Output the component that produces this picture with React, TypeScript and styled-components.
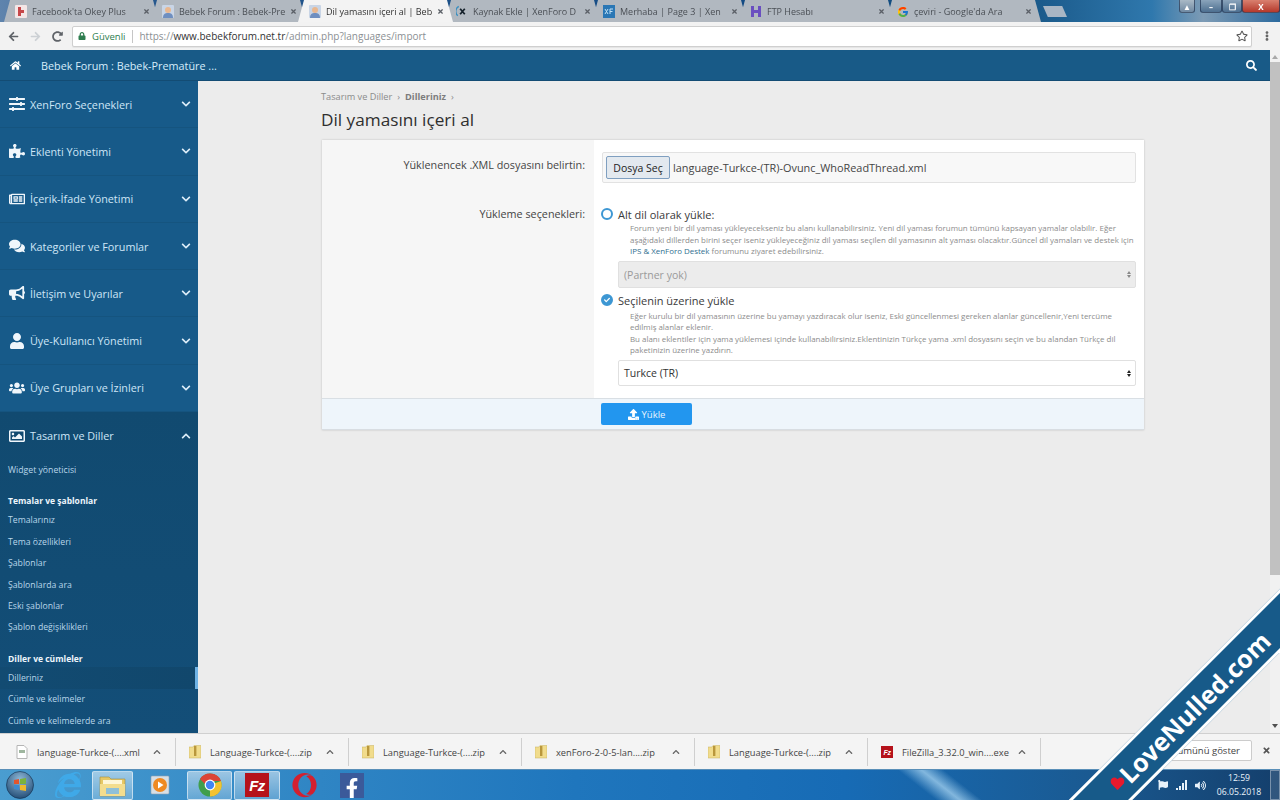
import React from "react";
import styled, { createGlobalStyle } from "styled-components";
import {
  FaHome, FaSearch, FaSlidersH, FaPuzzlePiece, FaRegNewspaper, FaComments, FaBullhorn, FaUser, FaUsers,
  FaRegImage, FaChevronDown, FaChevronUp, FaUpload, FaLock, FaRegStar, FaArrowLeft, FaArrowRight, FaRedoAlt,
  FaCheck, FaInternetExplorer, FaOpera, FaFacebookF, FaHeart, FaVolumeUp, FaFlag, FaTimes, FaEllipsisV,
} from "react-icons/fa";
import { FcGoogle } from "react-icons/fc";

const UI = `"Open Sans", "Noto Sans", sans-serif`;

const Global = createGlobalStyle`
  html, body { margin: 0; padding: 0; width: 1280px; height: 800px; overflow: hidden; background: #ececec; }
  * { box-sizing: border-box; }
  body { font-family: ${UI}; }
`;

const Screen = styled.div`
  position: relative; width: 1280px; height: 800px; overflow: hidden;
  display: flex; flex-direction: column; filter: blur(0.4px);
`;

/* Browser tabs */
const TabStrip = styled.div`
  height: 22px; flex: none; display: flex; align-items: stretch; padding-left: 4px; position: relative;
  background: linear-gradient(90deg, #5f84ad 0, #27588e 12%, #124a83 60%, #14507f 78%, #2f78ad 90%, #7d9bb5 94%, #2c6a9e 100%);
`;
const Tab = styled.div<{ $active?: boolean }>`
  width: 155px; margin-right: -8px; flex: none; display: flex; align-items: center; padding: 1px 9px 0 11px; gap: 5px;
  clip-path: polygon(0 100%, 6px 0, calc(100% - 6px) 0, 100% 100%);
  background: ${(p) => (p.$active ? "#f3f3f3" : "#b1b8c0")};
  position: relative; z-index: ${(p) => (p.$active ? 2 : 1)};
`;
const TabIcon = styled.span`
  width: 12px; height: 13px; flex: none; display: flex; align-items: center; justify-content: center;
`;
const TabTitle = styled.span<{ $active?: boolean }>`
  flex: 1; min-width: 0; overflow: hidden; white-space: nowrap; font-size: 9px; color: ${(p) => (p.$active ? "#333" : "#4a4f55")};
`;
const TabClose = styled(FaTimes)`
  flex: none; width: 7px; height: 7px; color: #5a5f66;
`;
const NewTab = styled.div`
  width: 24px; height: 11px; margin: 6px 0 0 10px; background: #a9b6c4;
  clip-path: polygon(0 0, 80% 0, 100% 100%, 20% 100%);
`;
const WindowControls = styled.div`
  position: absolute; top: 0; right: 0; height: 13px; display: flex; gap: 5px;
`;
const WinButton = styled.div<{ $w: number; $bg: string }>`
  width: ${(p) => p.$w}px; height: 13px; border: 1px solid rgba(30,50,80,.7); border-top: 0; border-radius: 0 0 3px 3px;
  background: ${(p) => p.$bg}; display: flex; align-items: center; justify-content: center; color: #fff; font-size: 8px; font-weight: 700;
`;
const WinGroup = styled.div`display: flex;`;

/* Toolbar */
const Toolbar = styled.div`
  height: 28px; flex: none; background: #f2f2f2; display: flex; align-items: center; padding: 0 8px 0 8px; color: #5f6368;
`;
const NavIcons = styled.div`
  width: 64px; flex: none; display: flex; align-items: center; gap: 11px; font-size: 11px;
`;
const FadedArrow = styled(FaArrowRight)`color: #ccd0d4;`;
const Omnibox = styled.div`
  flex: 1; height: 21px; background: #fff; border: 1px solid #cfcfcf; border-radius: 2px; display: flex; align-items: center;
  padding: 0 3px 0 5px; font-size: 10px; white-space: nowrap; box-shadow: 0 1px 0 #e5e5e5;
`;
const Secure = styled.span`
  color: #2e7d4f; display: flex; align-items: center; gap: 6px; padding-right: 7px; border-right: 1px solid #c6c6c6; height: 13px; margin-right: 6px; font-size: 9.5px;
`;
const UrlDim = styled.span`color: #8b8f93;`;
const UrlStrong = styled.span`color: #333;`;
const Star = styled(FaRegStar)`margin-left: auto; font-size: 12px; color: #555;`;
const Dots = styled(FaEllipsisV)`margin-left: 10px; font-size: 10px; color: #666;`;

/* Page */
const PageArea = styled.div`flex: 1; min-height: 0; display: flex;`;
const Scrollbar = styled.div`
  width: 10px; flex: none; background: #f1f1f1; display: flex; flex-direction: column; align-items: center; position: relative;
`;
const ScrollUp = styled.div`
  width: 0; height: 0; margin-top: 5px; border: 3px solid transparent; border-top: 0; border-bottom: 4px solid #a8a8a8;
`;
const ScrollThumb = styled.div`width: 10px; height: 513px; margin-top: 3px; background: #c1c1c1;`;
const ScrollDown = styled.div`
  width: 0; height: 0; margin-top: auto; margin-bottom: 5px; border: 3px solid transparent; border-bottom: 0; border-top: 4px solid #505050;
`;
const AdminColumn = styled.div`flex: 1; min-width: 0; display: flex; flex-direction: column;`;
const TopBar = styled.div`
  height: 31px; flex: none; background: #185a87; color: #d6ecfa; display: flex; align-items: center; padding: 0 22px 0 10px;
  border-bottom: 1px solid #134c74; font-size: 10.8px;
`;
const HomeIcon = styled(FaHome)`width: 11px; height: 11px; color: #fff; margin-right: 20px;`;
const SearchIcon = styled(FaSearch)`width: 11px; height: 11px; color: #fff; margin-left: auto; margin-right: -9px;`;
const AdminBody = styled.div`flex: 1; min-height: 0; display: flex;`;

const Sidebar = styled.nav`
  width: 198px; flex: none; background: #175a89; overflow: hidden; display: flex; flex-direction: column;
`;
const NavItem = styled.div`
  height: 47.3px; flex: none; display: flex; align-items: center; padding: 0 7px 0 9px; color: #cfe6f7; font-size: 10.8px; white-space: nowrap;
  border-bottom: 1px solid #15547f;
`;
const NavIcon = styled.span`
  width: 21px; flex: none; display: flex; align-items: center; justify-content: flex-start; color: #f0f6fb; font-size: 16px;
`;
const NavLabel = styled.span`flex: 1;`;
const Chevron = styled.span`font-size: 10px; color: #dcedf9; display: flex;`;
const ActiveGroup = styled.div`
  flex: 1; background: linear-gradient(180deg, #114a70 0, #134e78 100%); display: flex; flex-direction: column;
`;
const ActiveHead = styled(NavItem)`border-bottom: 0;`;
const SubItem = styled.div<{ $active?: boolean }>`
  height: 21.4px; flex: none; display: flex; align-items: center; padding-left: 8px; font-size: 8.7px; color: #b9d6ea; white-space: nowrap;
  background: ${(p) => (p.$active ? "linear-gradient(90deg, #124b72, #11476c)" : "transparent")};
  border-right: 3px solid ${(p) => (p.$active ? "#6fb3e6" : "transparent")};
`;
const SubHead = styled.div`
  height: 18px; margin-top: 11px; flex: none; display: flex; align-items: center; padding-left: 8px; font-size: 8.5px; font-weight: 700; color: #eef6fc; white-space: nowrap;
`;

const Content = styled.main`
  flex: 1; min-width: 0; background: #ececec; padding: 0 0 0 123px; display: flex; flex-direction: column; align-items: flex-start;
`;
const Crumbs = styled.div`
  height: 14px; margin-top: 8px; font-size: 9.2px; color: #8b8b8b; display: flex; align-items: center; gap: 5px; white-space: nowrap;
`;
const CrumbStrong = styled.span`font-weight: 700; color: #7c7c7c;`;
const Title = styled.h1`
  margin: 3px 0 0; height: 28px; line-height: 28px; font-size: 17.2px; font-weight: 400; color: #2f2f2f; white-space: nowrap;
`;
const Card = styled.section`
  margin: 6px 0 0 1px; width: 822px; background: #fff; box-shadow: 0 0 2px rgba(0,0,0,.2); display: flex; flex-direction: column;
`;
const FormRow = styled.div`display: grid; grid-template-columns: 272px 1fr;`;
const LabelCell = styled.div<{ $pt: number }>`
  background: #f6f6f6; text-align: right; padding: ${(p) => p.$pt}px 9px 0 0; font-size: 10.8px; line-height: 14px; color: #444; white-space: nowrap;
`;
const FieldCell = styled.div`padding: 12px 8px 12px 8px; display: flex; flex-direction: column; min-width: 0;`;
const FileBox = styled.div`
  height: 31px; border: 1px solid #e2e2e2; border-radius: 2px; background: #f8f8f8; display: flex; align-items: center; padding: 0 0 0 3px; gap: 3px; font-size: 10.9px; color: #444;
`;
const FileButton = styled.button`
  width: 64px; height: 23px; padding: 0; background: #e3e9ef; border: 1px solid #7f9fc0; border-radius: 2px; font: 400 10.5px ${UI}; color: #222;
`;
const OptionRow = styled.label<{ $mt?: number }>`
  height: 14px; margin-top: ${(p) => p.$mt ?? 0}px; display: flex; align-items: center; gap: 5px; font-size: 11px; color: #3a3a3a; white-space: nowrap;
`;
const Radio = styled.span<{ $checked?: boolean }>`
  width: 12px; height: 12px; flex: none; margin-left: -1px; border-radius: 50%; border: 2px solid #3d97d3; background: ${(p) => (p.$checked ? "#3d97d3" : "#fff")};
  display: flex; align-items: center; justify-content: center; color: #fff; font-size: 6px;
`;
const Hint = styled.div<{ $mt: number }>`
  margin: ${(p) => p.$mt}px 0 0 28px; font-size: 7.93px; line-height: 11.5px; color: #8c8c8c; white-space: nowrap;
`;
const HintLink = styled.span`color: #2f6f8f;`;
const SelectBox = styled.div<{ $disabled?: boolean; $h: number; $mt: number }>`
  height: ${(p) => p.$h}px; margin: ${(p) => p.$mt}px 0 0 16px; border: 1px solid #e0e0e0; border-radius: 2px;
  background: ${(p) => (p.$disabled ? "#ececec" : "#fff")}; color: ${(p) => (p.$disabled ? "#9a9a9a" : "#333")};
  display: flex; align-items: center; justify-content: space-between; padding: 0 4px 0 5px; font-size: 10.5px;
`;
const SelectArrows = styled.span<{ $disabled?: boolean }>`
  display: flex; flex-direction: column; gap: 1px;
  &::before, &::after { content: ""; display: block; width: 0; height: 0; border: 2.5px solid transparent; }
  &::before { border-top: 0; border-bottom: 3px solid ${(p) => (p.$disabled ? "#888" : "#222")}; }
  &::after { border-bottom: 0; border-top: 3px solid ${(p) => (p.$disabled ? "#888" : "#222")}; }
`;
const CardFooter = styled.div`
  height: 32px; background: #eef5fb; border-top: 1px solid #d9dfe4; display: flex; align-items: center; padding-left: 279px; border-bottom: 1px solid #d8dde2;
`;
const UploadButton = styled.button`
  width: 91px; height: 22px; border: 0; border-radius: 2px; background: #2296ef; color: #e8f4fe; font: 400 9.5px ${UI};
  display: flex; align-items: center; justify-content: center; gap: 3px; padding: 0 0 0 0;
`;

/* Downloads shelf */
const Shelf = styled.div`
  height: 36px; flex: none; background: #f4f4f4; border-top: 1px solid #d0d0d0; display: flex; align-items: stretch; padding: 3px 0 0 3px; position: relative;
`;
const DownloadItem = styled.div`
  width: 173px; flex: none; height: 28px; margin-top: 1px; display: flex; align-items: center; padding: 0 9px 0 13px; border-right: 1px solid #cfcfcf; font-size: 9.3px; color: #444; white-space: nowrap;
`;
const FileIcon = styled.span`width: 12px; height: 14px; flex: none; margin-right: 9px; display: flex; align-items: center;`;
const DownloadName = styled.span`flex: 1;`;
const Caret = styled(FaChevronUp)`width: 8px; height: 8px; color: #666; margin-right: 5px;`;
const ShowAll = styled.div`
  position: absolute; left: 1168px; top: 6px; width: 84px; height: 21px; background: #fff; border: 1px solid #ccc; border-radius: 2px; font-size: 9.5px; color: #444;
  display: flex; align-items: center; justify-content: flex-end; padding-right: 11px; white-space: nowrap;
`;
const ShelfClose = styled(FaTimes)`position: absolute; left: 1262px; top: 12px; width: 9px; height: 9px; color: #555;`;

/* Windows taskbar */
const Taskbar = styled.div`
  height: 31px; flex: none; position: relative; display: flex; align-items: center; padding-left: 4px;
  background:
    linear-gradient(38deg, transparent 71%, rgba(175,218,245,.7) 72.8%, transparent 74.5%),
    linear-gradient(90deg, #4a9dd0 0, #2f85c4 25%, #1f76bd 45%, #176bb5 66%, #1a5a92 85%, #143f6c 100%);
  border-top: 1px solid #5a8fb8;
`;
const TaskSlot = styled.div<{ $w: number; $on?: boolean; $ml?: number; $pl?: number }>`
  width: ${(p) => p.$w}px; height: 29px; flex: none; margin-left: ${(p) => p.$ml ?? 0}px; padding-left: ${(p) => p.$pl ?? 0}px;
  display: flex; align-items: center; justify-content: center;
  ${(p) => (p.$on ? "background: linear-gradient(180deg, rgba(255,255,255,.5), rgba(255,255,255,.22)); border: 1px solid rgba(255,255,255,.55); border-radius: 2px;" : "")}
`;
const FbSquare = styled.span`
  width: 24px; height: 25px; background: #3b5a9a; color: #fff; display: flex; align-items: flex-end; justify-content: center; font-size: 20px; overflow: hidden;
`;
const FzSquare = styled.span<{ $s: number }>`
  width: ${(p) => p.$s}px; height: ${(p) => p.$s}px; background: #b5121b; color: #fff; display: flex; align-items: center; justify-content: center;
  font: italic 700 ${(p) => Math.round(p.$s * 0.62)}px "Liberation Sans", sans-serif; letter-spacing: -.5px; flex: none;
`;
const Tray = styled.div`
  position: absolute; left: 1158px; top: 0; height: 30px; display: flex; align-items: center; gap: 8px; color: #e8f2fa; font-size: 10px;
`;
const TrayBars = styled.span`display: flex; align-items: flex-end; gap: 1px; height: 10px;`;
const TrayBar = styled.span<{ $h: number }>`width: 2px; height: ${(p) => p.$h}px; background: #e8f2fa;`;
const Clock = styled.div`
  position: absolute; left: 1210px; top: 0; width: 58px; height: 30px; color: #eaf3fb; font-size: 8.7px; line-height: 14px; text-align: center; display: flex; flex-direction: column; justify-content: center;
`;
const ShowDesktop = styled.div`
  position: absolute; right: 0; top: 0; width: 10px; height: 30px; background: rgba(255,255,255,.12); border: 1px solid rgba(255,255,255,.35);
`;

/* Watermark */
const Ribbon = styled.div`
  position: absolute; left: 1010px; top: 688px; width: 360px; height: 45px; transform: rotate(-45deg);
  background: #175a89; border-top: 3px solid #fff; border-bottom: 3px solid #fff;
  display: flex; align-items: center; padding-left: 70px; z-index: 10; color: #fff;
  font: 700 25px ${UI}; white-space: nowrap;
`;
const RibbonHeart = styled(FaHeart)`color: #e8192c; width: 14px; height: 14px; margin-right: 1px; transform: rotate(45deg); flex: none;`;

const Avatar = () => (
  <svg width="12" height="13" viewBox="0 0 12 13">
    <rect width="12" height="13" fill="#c9d5e6" rx="1" />
    <circle cx="6" cy="5" r="3" fill="#e9b78f" />
    <path d="M1 13c0-4 2-5 5-5s5 1 5 5z" fill="#6f8fc0" />
  </svg>
);
const FbFav = () => (
  <svg width="12" height="13" viewBox="0 0 12 13">
    <rect width="12" height="13" fill="#f4e6e6" rx="1" />
    <path d="M3 2h3v3h3v3H6v3H3z" fill="#c6474a" />
  </svg>
);
const XFav = () => (
  <svg width="13" height="13" viewBox="0 0 13 13">
    <path d="M3 1a6 6 0 0 0-1 10" fill="none" stroke="#3a8fc0" strokeWidth="1.6" />
    <path d="M4.5 3.5l5 6M9.5 3.5l-5 6" stroke="#16222c" strokeWidth="1.9" />
  </svg>
);
const XfFav = () => (
  <svg width="12" height="13" viewBox="0 0 12 13">
    <rect width="12" height="13" fill="#2a77b5" />
    <path d="M2 4l3 5M5 4l-3 5M7 9V4h3M7 6.5h2.5" stroke="#bfe0f5" strokeWidth="1" fill="none" />
  </svg>
);
const HFav = () => (
  <svg width="12" height="13" viewBox="0 0 12 13">
    <path d="M1 1h3v4h4V1h3v11H8V8H4v4H1z" fill="#6a4fc0" />
  </svg>
);
const ZipIcon = () => (
  <svg width="12" height="14" viewBox="0 0 12 14">
    <path d="M0 2h4l1-1.5h7V13H0z" fill="#f1dc8c" stroke="#c7b262" strokeWidth=".5" />
    <rect x="5" y="1" width="2.4" height="10" fill="#b9973c" />
  </svg>
);
const DocIcon = () => (
  <svg width="12" height="14" viewBox="0 0 12 14">
    <path d="M1 .5h7l3 3V13.5H1z" fill="#fff" stroke="#b5b5b5" />
    <rect x="3" y="5" width="6" height="3" fill="#9fb69f" />
  </svg>
);
const Orb = () => (
  <svg width="28" height="28" viewBox="0 0 28 28">
    <defs>
      <radialGradient id="orbg" cx=".5" cy=".3" r=".8">
        <stop offset="0" stopColor="#8fb9d8" />
        <stop offset="1" stopColor="#17406a" />
      </radialGradient>
    </defs>
    <circle cx="14" cy="14" r="13.5" fill="url(#orbg)" stroke="#0e2c4a" strokeWidth=".6" />
    <path d="M8 9l5-1v5H8z" fill="#e3552d" />
    <path d="M14 8l6-1v6h-6z" fill="#7bb33c" />
    <path d="M8 14h5v5l-5-1z" fill="#3c8ad0" />
    <path d="M14 14h6v6l-6-1z" fill="#eeb92c" />
  </svg>
);
const Folder = () => (
  <svg width="27" height="24" viewBox="0 0 27 24">
    <path d="M1 4h9l2 2h14v17H1z" fill="#e6c865" stroke="#a68e3c" strokeWidth=".6" />
    <rect x="4" y="7" width="19" height="5" fill="#fdf6d8" />
    <path d="M1 11h25v12H1z" fill="#f3dd8e" />
    <rect x="7" y="15" width="13" height="6" fill="#8fc0d8" />
  </svg>
);
const MediaIcon = () => (
  <svg width="20" height="20" viewBox="0 0 20 20">
    <rect x="1" y="1" width="18" height="18" rx="1" fill="#d6dfe6" stroke="#8fa3b3" strokeWidth=".6" />
    <circle cx="10" cy="10" r="7" fill="#ee8a22" />
    <path d="M8 6.5l5.5 3.5L8 13.5z" fill="#fff" />
  </svg>
);
const ChromeIcon = () => (
  <svg width="24" height="24" viewBox="0 0 24 24">
    <circle cx="12" cy="12" r="11.5" fill="#3f9e4c" />
    <path d="M12 12L23 8a11.5 11.5 0 0 1-11 15.5z" fill="#f2c230" />
    <path d="M2 6A11.5 11.5 0 0 1 12 .5 11.5 11.5 0 0 1 23 8H12a4 4 0 0 0-4 4z" fill="#db4437" />
    <circle cx="12" cy="12" r="5.4" fill="#fff" />
    <circle cx="12" cy="12" r="4.2" fill="#4285f4" />
  </svg>
);

const tabs = [
  { t: "Facebook'ta Okey Plus", i: <FbFav /> },
  { t: "Bebek Forum : Bebek-Pre", i: <Avatar /> },
  { t: "Dil yamasını içeri al | Beb", i: <Avatar />, a: true },
  { t: "Kaynak Ekle | XenForo D", i: <XFav /> },
  { t: "Merhaba | Page 3 | Xen", i: <XfFav /> },
  { t: "FTP Hesabı", i: <HFav /> },
  { t: "çeviri - Google'da Ara", i: <FcGoogle size={12} /> },
];
const nav = [
  { t: "XenForo Seçenekleri", i: <FaSlidersH /> },
  { t: "Eklenti Yönetimi", i: <FaPuzzlePiece /> },
  { t: "İçerik-İfade Yönetimi", i: <FaRegNewspaper /> },
  { t: "Kategoriler ve Forumlar", i: <FaComments /> },
  { t: "İletişim ve Uyarılar", i: <FaBullhorn /> },
  { t: "Üye-Kullanıcı Yönetimi", i: <FaUser /> },
  { t: "Üye Grupları ve İzinleri", i: <FaUsers /> },
];
const downloads = [
  { n: "language-Turkce-(....xml", i: <DocIcon /> },
  { n: "Language-Turkce-(....zip", i: <ZipIcon /> },
  { n: "Language-Turkce-(....zip", i: <ZipIcon /> },
  { n: "xenForo-2-0-5-lan....zip", i: <ZipIcon /> },
  { n: "Language-Turkce-(....zip", i: <ZipIcon /> },
  { n: "FileZilla_3.32.0_win....exe", i: <FzSquare $s={12}>Fz</FzSquare> },
];

export default function App() {
  return (
    <Screen>
      <Global />
      <TabStrip>
        {tabs.map((x) => (
          <Tab key={x.t} $active={x.a}>
            <TabIcon>{x.i}</TabIcon>
            <TabTitle $active={x.a}>{x.t}</TabTitle>
            <TabClose />
          </Tab>
        ))}
        <NewTab />
        <WindowControls>
          <WinButton $w={16} $bg="linear-gradient(180deg,#a9b9c6,#708aa3)">▲</WinButton>
          <WinGroup>
            <WinButton $w={22} $bg="linear-gradient(180deg,#8aa4bb,#4d6f90)">–</WinButton>
            <WinButton $w={20} $bg="linear-gradient(180deg,#8aa4bb,#4d6f90)">❐</WinButton>
            <WinButton $w={38} $bg="linear-gradient(180deg,#d9806f,#b5392b)">X</WinButton>
          </WinGroup>
        </WindowControls>
      </TabStrip>

      <Toolbar>
        <NavIcons>
          <FaArrowLeft />
          <FadedArrow />
          <FaRedoAlt />
        </NavIcons>
        <Omnibox>
          <Secure><FaLock size={8} />Güvenli</Secure>
          <UrlDim>https://</UrlDim>
          <UrlStrong>www.bebekforum.net.tr</UrlStrong>
          <UrlDim>/admin.php?languages/import</UrlDim>
          <Star />
        </Omnibox>
        <Dots />
      </Toolbar>

      <PageArea>
        <AdminColumn>
          <TopBar>
            <HomeIcon />
            Bebek Forum : Bebek-Prematüre ...
            <SearchIcon />
          </TopBar>
          <AdminBody>
            <Sidebar>
              {nav.map((n) => (
                <NavItem key={n.t}>
                  <NavIcon>{n.i}</NavIcon>
                  <NavLabel>{n.t}</NavLabel>
                  <Chevron><FaChevronDown /></Chevron>
                </NavItem>
              ))}
              <ActiveGroup>
                <ActiveHead>
                  <NavIcon><FaRegImage /></NavIcon>
                  <NavLabel>Tasarım ve Diller</NavLabel>
                  <Chevron><FaChevronUp /></Chevron>
                </ActiveHead>
                <SubItem>Widget yöneticisi</SubItem>
                <SubHead>Temalar ve şablonlar</SubHead>
                <SubItem>Temalarınız</SubItem>
                <SubItem>Tema özellikleri</SubItem>
                <SubItem>Şablonlar</SubItem>
                <SubItem>Şablonlarda ara</SubItem>
                <SubItem>Eski şablonlar</SubItem>
                <SubItem>Şablon değişiklikleri</SubItem>
                <SubHead>Diller ve cümleler</SubHead>
                <SubItem $active>Dilleriniz</SubItem>
                <SubItem>Cümle ve kelimeler</SubItem>
                <SubItem>Cümle ve kelimelerde ara</SubItem>
              </ActiveGroup>
            </Sidebar>
            <Content>
              <Crumbs>
                Tasarım ve Diller <span>›</span> <CrumbStrong>Dilleriniz</CrumbStrong> <span>›</span>
              </Crumbs>
              <Title>Dil yamasını içeri al</Title>
              <Card>
                <FormRow>
                  <LabelCell $pt={18}>Yüklenencek .XML dosyasını belirtin:</LabelCell>
                  <FieldCell>
                    <FileBox>
                      <FileButton>Dosya Seç</FileButton>
                      language-Turkce-(TR)-Ovunc_WhoReadThread.xml
                    </FileBox>
                  </FieldCell>
                </FormRow>
                <FormRow>
                  <LabelCell $pt={12}>Yükleme seçenekleri:</LabelCell>
                  <FieldCell>
                    <OptionRow><Radio />Alt dil olarak yükle:</OptionRow>
                    <Hint $mt={2}>
                      Forum yeni bir dil yaması yükleyecekseniz bu alanı kullanabilirsiniz. Yeni dil yaması forumun tümünü kapsayan yamalar olabilir. Eğer
                      <br />
                      aşağıdaki dillerden birini seçer iseniz yükleyeceğiniz dil yaması seçilen dil yamasının alt yaması olacaktır.Güncel dil yamaları ve destek için
                      <br />
                      <HintLink>IPS &amp; XenForo Destek</HintLink> forumunu ziyaret edebilirsiniz.
                    </Hint>
                    <SelectBox $disabled $h={27} $mt={3.5}>(Partner yok)<SelectArrows $disabled /></SelectBox>
                    <OptionRow $mt={5}><Radio $checked><FaCheck /></Radio>Seçilenin üzerine yükle</OptionRow>
                    <Hint $mt={3.5}>
                      Eğer kurulu bir dil yamasının üzerine bu yamayı yazdıracak olur iseniz, Eski güncellenmesi gereken alanlar güncellenir,Yeni tercüme
                      <br />
                      edilmiş alanlar eklenir.
                      <br />
                      Bu alanı eklentiler için yama yüklemesi içinde kullanabilirsiniz.Eklentinizin Türkçe yama .xml dosyasını seçin ve bu alandan Türkçe dil
                      <br />
                      paketinizin üzerine yazdırın.
                    </Hint>
                    <SelectBox $h={26} $mt={3.5}>Turkce (TR)<SelectArrows /></SelectBox>
                  </FieldCell>
                </FormRow>
                <CardFooter>
                  <UploadButton><FaUpload size={11} color="#fff" />Yükle</UploadButton>
                </CardFooter>
              </Card>
            </Content>
          </AdminBody>
        </AdminColumn>
        <Scrollbar>
          <ScrollUp />
          <ScrollThumb />
          <ScrollDown />
        </Scrollbar>
      </PageArea>

      <Shelf>
        {downloads.map((d, i) => (
          <DownloadItem key={i}>
            <FileIcon>{d.i}</FileIcon>
            <DownloadName>{d.n}</DownloadName>
            <Caret />
          </DownloadItem>
        ))}
        <ShowAll>Tümünü göster</ShowAll>
        <ShelfClose />
      </Shelf>

      <Taskbar>
        <TaskSlot $w={32}><Orb /></TaskSlot>
        <TaskSlot $w={56} $pl={7}><FaInternetExplorer size={26} color="#3fa9e8" /></TaskSlot>
        <TaskSlot $w={41} $on><Folder /></TaskSlot>
        <TaskSlot $w={54}><MediaIcon /></TaskSlot>
        <TaskSlot $w={45} $on><ChromeIcon /></TaskSlot>
        <TaskSlot $w={46} $ml={2} $on><FzSquare $s={24}>Fz</FzSquare></TaskSlot>
        <TaskSlot $w={48}><FaOpera size={25} color="#d3202f" /></TaskSlot>
        <TaskSlot $w={48}><FbSquare><FaFacebookF /></FbSquare></TaskSlot>
        <Tray>
          <FaFlag size={10} />
          <TrayBars>
            <TrayBar $h={2} /><TrayBar $h={4} /><TrayBar $h={7} /><TrayBar $h={10} />
          </TrayBars>
          <FaVolumeUp size={11} />
        </Tray>
        <Clock>
          <span>12:59</span>
          <span>06.05.2018</span>
        </Clock>
        <ShowDesktop />
      </Taskbar>

      <Ribbon>
        <RibbonHeart />
        LoveNulled.com
      </Ribbon>
    </Screen>
  );
}
